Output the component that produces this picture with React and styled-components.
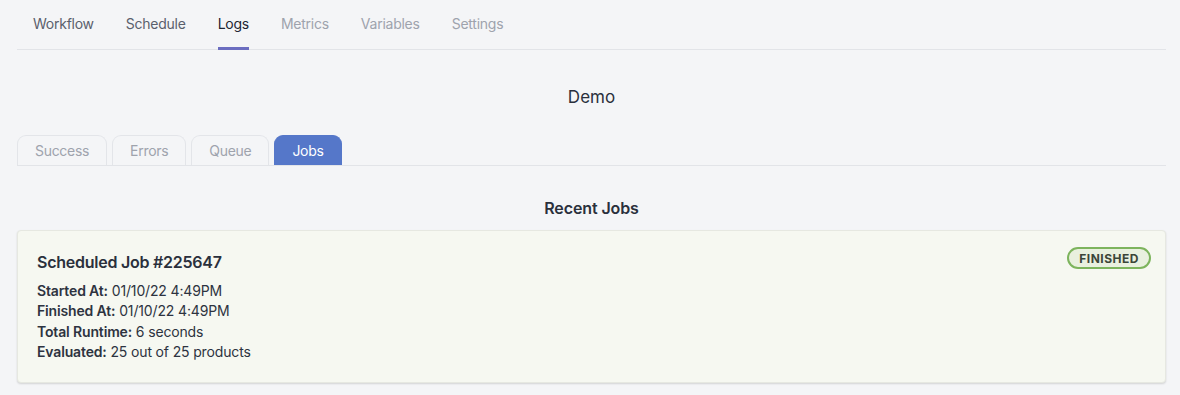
import React from "react";
import styled, { createGlobalStyle } from "styled-components";

const Global = createGlobalStyle`
  html, body { margin: 0; padding: 0; background: #f4f5f7; }
  body { font-family: Inter, "Noto Sans", sans-serif; color: #2d3340; -webkit-font-smoothing: antialiased; }
`;

const Page = styled.div`
  padding: 0 14px 20px 17px;
`;

const Nav = styled.nav`
  display: flex;
  gap: 32px;
  padding: 0 16px;
  border-bottom: 1px solid #e2e4e8;
  height: 49px;
`;

const NavItem = styled.a`
  display: flex;
  align-items: center;
  height: 47px;
  font-size: 14px;
  letter-spacing: -0.25px;
  color: ${(p) => (p.$active ? "#1f2533" : p.$muted ? "#9ea3ad" : "#5a606c")};
  border-bottom: 3px solid ${(p) => (p.$active ? "#6b6dc0" : "transparent")};
  margin-bottom: -1px;
  cursor: pointer;
`;

const Title = styled.h1`
  margin: 35px 0 26px;
  text-align: center;
  font-size: 17px;
  line-height: 24px;
  font-weight: 400;
  color: #2a303c;
`;

const Tabs = styled.div`
  display: flex;
  gap: 5px;
  border-bottom: 1px solid #e2e4e8;
`;

const Tab = styled.button`
  height: 30px;
  padding: 0 17px 1px;
  font-family: inherit;
  font-size: 14px;
  letter-spacing: -0.3px;
  border: 1px solid ${(p) => (p.$active ? "#5577c9" : "#e3e5e9")};
  border-bottom: none;
  border-radius: 9px 9px 0 0;
  background: ${(p) => (p.$active ? "#5577c9" : "#f4f5f7")};
  color: ${(p) => (p.$active ? "#ffffff" : "#9ea3ad")};
`;

const SectionTitle = styled.h2`
  margin: 30px 0 10px;
  text-align: center;
  font-size: 16px;
  line-height: 24px;
  font-weight: 600;
  letter-spacing: -0.1px;
  color: #2a303c;
`;

const Card = styled.div`
  position: relative;
  background: #f6f8f1;
  border: 1px solid #e6e8e1;
  border-radius: 4px;
  box-shadow: 0 1px 2px rgba(0, 0, 0, 0.14);
  padding: 19px 19px 20px;
`;

const CardTitle = styled.h3`
  margin: 0 0 7px;
  font-size: 16px;
  line-height: 24px;
  font-weight: 600;
  letter-spacing: -0.25px;
  color: #2a303c;
`;

const Line = styled.div`
  font-size: 14px;
  line-height: 20.3px;
  letter-spacing: -0.15px;
  color: #2d3340;
  b { font-weight: 600; }
`;

const Badge = styled.span`
  position: absolute;
  top: 16px;
  right: 14px;
  height: 22px;
  box-sizing: border-box;
  padding: 0 10px;
  display: flex;
  align-items: center;
  border: 2px solid #7db45d;
  border-radius: 12px;
  background: #e9f0df;
  color: #3b4538;
  font-size: 12px;
  font-weight: 700;
  letter-spacing: 0.5px;
`;

export default function App() {
  return (
    <Page>
      <Global />
      <Nav>
        <NavItem>Workflow</NavItem>
        <NavItem>Schedule</NavItem>
        <NavItem $active>Logs</NavItem>
        <NavItem $muted>Metrics</NavItem>
        <NavItem $muted>Variables</NavItem>
        <NavItem $muted>Settings</NavItem>
      </Nav>
      <Title>Demo</Title>
      <Tabs>
        <Tab>Success</Tab>
        <Tab>Errors</Tab>
        <Tab>Queue</Tab>
        <Tab $active>Jobs</Tab>
      </Tabs>
      <SectionTitle>Recent Jobs</SectionTitle>
      <Card>
        <Badge>FINISHED</Badge>
        <CardTitle>Scheduled Job #225647</CardTitle>
        <Line><b>Started At:</b> 01/10/22 4:49PM</Line>
        <Line><b>Finished At:</b> 01/10/22 4:49PM</Line>
        <Line><b>Total Runtime:</b> 6 seconds</Line>
        <Line><b>Evaluated:</b> 25 out of 25 products</Line>
      </Card>
    </Page>
  );
}
